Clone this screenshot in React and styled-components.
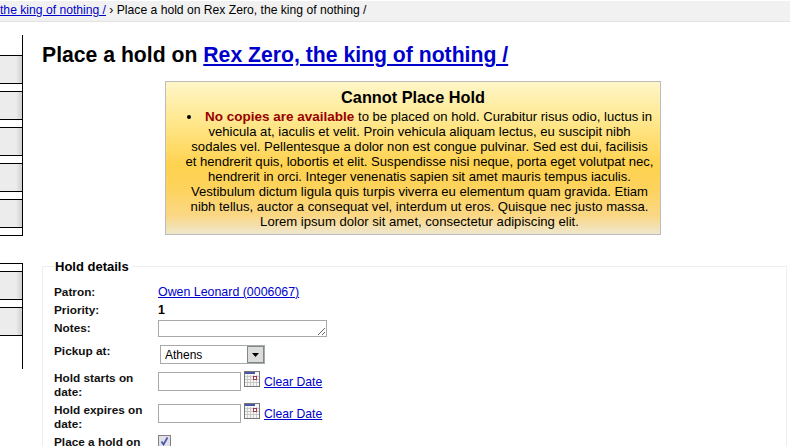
import React from "react";
import styled, { createGlobalStyle } from "styled-components";

const Global = createGlobalStyle`
  html, body { margin: 0; padding: 0; background: #fff; overflow: hidden; }
  body { font-family: "Liberation Sans", Arial, sans-serif; font-size: 12px; color: #000; }
  a { color: #0000cc; }
`;

const Page = styled.div`
  width: 790px;
  height: 446px;
  overflow: hidden;
`;

const Breadcrumbs = styled.div`
  height: 20px;
  margin-top: 1px;
  background: #f1f1f1;
  border-bottom: 1px solid #e3e3e3;
  font-size: 12.15px;
  line-height: 19px;
  white-space: nowrap;
`;

const Body = styled.div`
  display: flex;
`;

const Sidebar = styled.div`
  width: 23px;
  flex: none;
  padding-top: 13px;
`;

const NavGroup = styled.ul`
  list-style: none;
  margin: 0 0 ${(p) => p.$gap}px;
  padding: ${(p) => p.$top}px 0 ${(p) => p.$bottom}px;
  border-right: 1px solid #000;
  border-top: ${(p) => (p.$capped ? "1px solid #000" : "0")};
  border-bottom: ${(p) => (p.$capped ? "0" : "1px solid #000")};
`;

const NavItem = styled.li`
  height: 27px;
  margin-bottom: 7px;
  background: linear-gradient(to right, #ececec 0, #ececec 16px, #cfcfcf 22px);
  border-top: 1px solid #000;
  border-bottom: 1px solid #000;
  &:last-child { margin-bottom: 0; }
`;

const Main = styled.div`
  flex: 1;
  padding-left: 19px;
  padding-right: 3px;
`;

const Heading = styled.h1`
  margin: 20px 0 13px;
  font-size: 21.2px;
  line-height: 26px;
  font-weight: bold;
  white-space: nowrap;
`;

const Alert = styled.div`
  width: 494px;
  height: 152px;
  margin-left: 123px;
  border: 1px solid #bcbcbc;
  background: linear-gradient(#fff6c8 0%, #ffe88f 25%, #ffd24f 55%, #fdd35d 70%, #fad785 88%, #efe7cd 100%);
  text-align: center;
`;

const AlertTitle = styled.h3`
  margin: 0;
  padding-top: 6px;
  font-size: 16.3px;
  line-height: 19px;
  font-weight: bold;
`;

const AlertList = styled.ul`
  margin: 2px 0 0;
  padding: 0 0 0 13px;
  font-size: 13.1px;
  line-height: 15px;
  white-space: nowrap;
  list-style-position: inside;
`;

const Strong = styled.strong`
  font-size: 13.5px;
  color: #990000;
`;

const Details = styled.fieldset`
  margin: 24px 0 0;
  padding: 0 0 0 11px;
  border: 1px solid #eeeeee;
  border-bottom: 0;
  min-width: 0;
`;

const Legend = styled.legend`
  padding: 0 3px 0 0;
  margin-left: 1px;
  font-size: 13px;
  line-height: 15px;
  font-weight: bold;
`;

const Fields = styled.ol`
  list-style: none;
  margin: 11px 0 0;
  padding: 0;
`;

const Field = styled.li`
  display: flex;
  align-items: flex-start;
  min-height: ${(p) => p.$height}px;
`;

const Label = styled.label`
  width: 104px;
  flex: none;
  font-size: 11.8px;
  line-height: 14px;
  font-weight: bold;
  color: #111;
`;

const Value = styled.div`
  font-size: 12.4px;
  line-height: 14px;
  display: flex;
  align-items: flex-start;
`;

const Notes = styled.textarea`
  display: block;
  box-sizing: border-box;
  width: 169px;
  height: 17px;
  margin: -1px 0 0;
  padding: 0;
  border: 1px solid #a9a9a9;
  background: #fff;
  resize: both;
`;

const Select = styled.div`
  display: flex;
  align-items: center;
  box-sizing: border-box;
  width: 105px;
  height: 19px;
  margin: 1px 0 0 2px;
  border: 1px solid #a9a9a9;
  font-size: 12px;
  padding-left: 4px;
  justify-content: space-between;
`;

const Arrow = styled.span`
  display: flex;
  align-items: center;
  justify-content: center;
  box-sizing: border-box;
  width: 17px;
  height: 17px;
  background: #dcdcdc;
  border: 1px solid #7b8a85;
`;

const DateInput = styled.input`
  box-sizing: border-box;
  width: 83px;
  height: 19px;
  margin: 1px 3px 0 0;
  padding: 0;
  border: 1px solid #a9a9a9;
`;

const ClearLink = styled.a`
  margin: 4px 0 0 4px;
  font-size: 12.2px;
`;

const Checkbox = styled.span`
  display: flex;
  box-sizing: border-box;
  width: 13px;
  height: 13px;
  border: 1px solid #8a7f7f;
  background: #dfe0ea;
`;

function CalendarIcon() {
  return (
    <svg width="16" height="16" viewBox="0 0 16 16">
      <rect x="0.5" y="0.5" width="15" height="15" fill="#f6f6f6" stroke="#777777" />
      <path d="M1 5.5H15M1 8.5H15M1 11.5H15M3.5 4V15M6.5 4V15M9.5 4V15M12.5 4V15" stroke="#c8c8c8" />
      <rect x="1" y="1" width="10" height="2" fill="#4a55a5" />
      <rect x="9.5" y="5.5" width="3" height="3" fill="#fff" stroke="#9a3a4a" />
    </svg>
  );
}

function DateField({ label }) {
  return (
    <Field $height={32}>
      <Label>{label}</Label>
      <Value>
        <DateInput type="text" />
        <CalendarIcon />
        <ClearLink href="#">Clear Date</ClearLink>
      </Value>
    </Field>
  );
}

export default function App() {
  return (
    <Page>
      <Global />
      <Breadcrumbs>
        <a href="#">the king of nothing /</a> › Place a hold on Rex Zero, the king of nothing /
      </Breadcrumbs>
      <Body>
        <Sidebar>
          <NavGroup $top={20} $bottom={7} $gap={27}>
            <NavItem />
            <NavItem />
            <NavItem />
            <NavItem />
            <NavItem />
          </NavGroup>
          <NavGroup $capped $top={7} $bottom={33} $gap={0}>
            <NavItem />
            <NavItem />
          </NavGroup>
        </Sidebar>
        <Main>
          <Heading>
            Place a hold on <a href="#">Rex Zero, the king of nothing /</a>
          </Heading>
          <Alert>
            <AlertTitle>Cannot Place Hold</AlertTitle>
            <AlertList>
              <li>
                <Strong>No copies are available</Strong> to be placed on hold. Curabitur risus odio, luctus in<br />
                vehicula at, iaculis et velit. Proin vehicula aliquam lectus, eu suscipit nibh<br />
                sodales vel. Pellentesque a dolor non est congue pulvinar. Sed est dui, facilisis<br />
                et hendrerit quis, lobortis et elit. Suspendisse nisi neque, porta eget volutpat nec,<br />
                hendrerit in orci. Integer venenatis sapien sit amet mauris tempus iaculis.<br />
                Vestibulum dictum ligula quis turpis viverra eu elementum quam gravida. Etiam<br />
                nibh tellus, auctor a consequat vel, interdum ut eros. Quisque nec justo massa.<br />
                Lorem ipsum dolor sit amet, consectetur adipiscing elit.
              </li>
            </AlertList>
          </Alert>
          <Details>
            <Legend>Hold details</Legend>
            <Fields>
              <Field $height={18}>
                <Label>Patron:</Label>
                <Value><a href="#">Owen Leonard (0006067)</a></Value>
              </Field>
              <Field $height={18}>
                <Label>Priority:</Label>
                <Value><b>1</b></Value>
              </Field>
              <Field $height={23}>
                <Label>Notes:</Label>
                <Value><Notes /></Value>
              </Field>
              <Field $height={27}>
                <Label>Pickup at:</Label>
                <Value>
                  <Select>
                    Athens
                    <Arrow>
                      <svg width="7" height="4" viewBox="0 0 7 4"><path d="M0 0H7L3.5 4Z" fill="#000" /></svg>
                    </Arrow>
                  </Select>
                </Value>
              </Field>
              <DateField label="Hold starts on date:" />
              <DateField label="Hold expires on date:" />
              <Field $height={20}>
                <Label>Place a hold on</Label>
                <Value>
                  <Checkbox>
                    <svg width="11" height="11" viewBox="0 0 11 11"><path d="M2.5 5.5L4.5 8.5L8.5 1.5" fill="none" stroke="#4a55a5" strokeWidth="1.7" /></svg>
                  </Checkbox>
                </Value>
              </Field>
            </Fields>
          </Details>
        </Main>
      </Body>
    </Page>
  );
}
